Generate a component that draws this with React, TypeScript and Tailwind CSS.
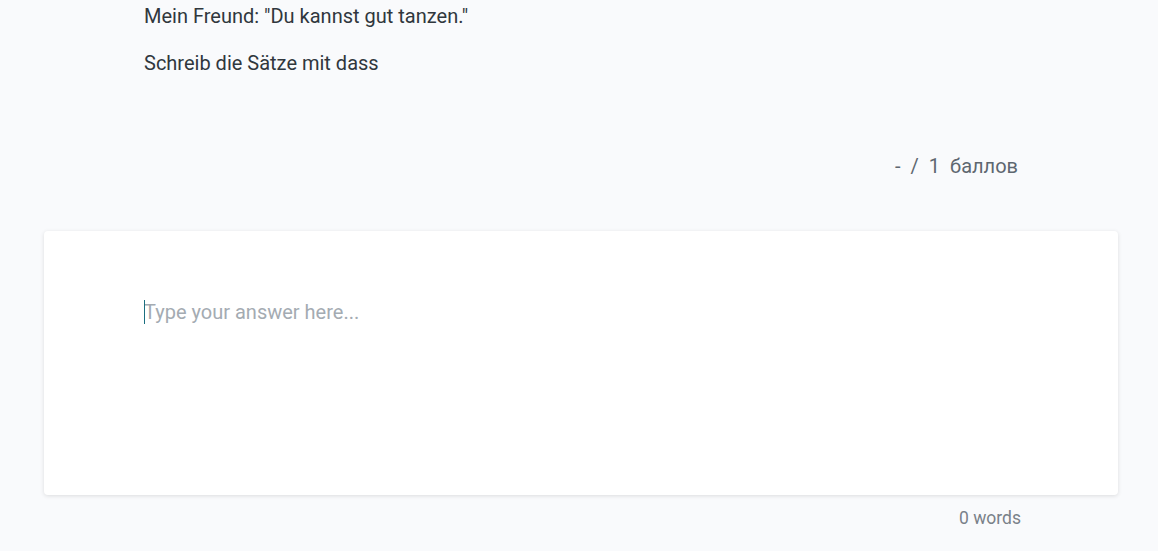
import React from 'react';

const App: React.FC = () => {
  return (
    <div className="min-h-[551px] bg-[#f9fafc] font-['Roboto',sans-serif] text-[#30373d]">
      <div className="px-[144px] pt-[4px]">
        <p className="text-[20px] leading-[24px]">Mein Freund: "Du kannst gut tanzen."</p>
        <p className="mt-[23px] text-[20px] leading-[24px]">Schreib die Sätze mit dass</p>
      </div>

      {/* Score */}
      <div className="flex justify-end pr-[140px] pt-[76px] text-[20px] leading-[30px] text-[#5e6770]">
        <span>-</span>
        <span className="ml-[10px]">/</span>
        <span className="ml-[10px]">1</span>
        <span className="ml-[10px]">баллов</span>
      </div>

      {/* Answer card */}
      <div className="ml-[44px] mr-[40px] mt-[50px] h-[264px] rounded-[4px] bg-white shadow-[0_1px_4px_rgba(0,0,0,0.12)] px-[100px] pt-[68px]">
        <div className="relative text-[20px] leading-[26px] text-[#a4abb2]">
          <span className="absolute left-0 top-[1px] h-[24px] w-[1px] bg-[#1b6f80]" />
          Type your answer here...
        </div>
      </div>

      <div className="flex justify-end pr-[137px] pt-[10px] text-[17.5px] leading-[27px] text-[#7a8189]">
        0 words
      </div>
    </div>
  );
};

export default App;
